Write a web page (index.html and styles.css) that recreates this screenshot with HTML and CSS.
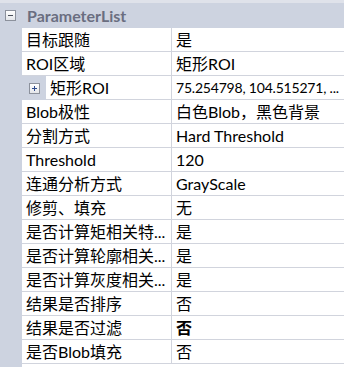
FILE: index.html
```html
<!DOCTYPE html>
<html>
<head>
<meta charset="utf-8">
<title>ParameterList</title>
<link rel="stylesheet" href="styles.css">
</head>
<body>
<div class="grid">
	<div class="cat">
		<span class="tog minus"></span>
		<span class="cat-name">ParameterList</span>
	</div>
	<div class="row"><div class="name">目标跟随</div><div class="val">是</div></div>
	<div class="row"><div class="name">ROI区域</div><div class="val">矩形ROI</div></div>
	<div class="row sub">
		<div class="indent"><span class="tog plus"></span></div>
		<div class="name">矩形ROI</div><div class="val coord">75.254798, 104.515271, ...</div>
	</div>
	<div class="row"><div class="name">Blob极性</div><div class="val">白色Blob，黑色背景</div></div>
	<div class="row"><div class="name">分割方式</div><div class="val">Hard Threshold</div></div>
	<div class="row"><div class="name">Threshold</div><div class="val">120</div></div>
	<div class="row"><div class="name">连通分析方式</div><div class="val">GrayScale</div></div>
	<div class="row"><div class="name">修剪、填充</div><div class="val">无</div></div>
	<div class="row"><div class="name">是否计算矩相关特...</div><div class="val">是</div></div>
	<div class="row"><div class="name">是否计算轮廓相关...</div><div class="val">是</div></div>
	<div class="row"><div class="name">是否计算灰度相关...</div><div class="val">是</div></div>
	<div class="row"><div class="name">结果是否排序</div><div class="val">否</div></div>
	<div class="row"><div class="name">结果是否过滤</div><div class="val bold">否</div></div>
	<div class="row"><div class="name">是否Blob填充</div><div class="val">否</div></div>
</div>
</body>
</html>
```

FILE: styles.css
```css
body {margin: 0;padding: 0;background: #fff;font-family: "Lato", "Noto Sans CJK SC", sans-serif;font-size: 16px;color: #000;}
.grid {width: 344px;height: 367px;background: linear-gradient(to right, #cdd3e0 22px, #fff 22px);border-top: 3px solid #dfe2ea;box-sizing: border-box;overflow: hidden;}
.cat {height: 25px;background: #cdd3e0;display: flex;align-items: center;}
.cat-name {margin-left: 11px;font-weight: bold;color: #6a6e80;font-size: 16px;}
.tog {display: inline-block;width: 9px;height: 9px;border: 1px solid #8c919c;background: linear-gradient(#fff, #e4e6ea);position: relative;margin-left: 5px;}
.tog::before {content: "";position: absolute;left: 2px;top: 4px;width: 5px;height: 1px;background: #4a4f5a;}
.plus::before {background: #2d4a8c;}
.plus::after {content: "";position: absolute;left: 4px;top: 2px;width: 1px;height: 5px;background: #2d4a8c;}
.row {display: grid;grid-template-columns: 150px 1fr;margin-left: 22px;height: 24px;}
.row.sub {grid-template-columns: 46px 126px 1fr;margin-left: 0;}
.sub .indent {background: #cdd3e0;display: flex;align-items: center;padding-left: 24px;}
.name, .val {border-bottom: 1px solid #d1d4dd;white-space: nowrap;overflow: hidden;line-height: 23px;}
.name {padding-left: 4px;border-right: 1px solid #d1d4dd;}
.val {padding-left: 4px;}
.coord {font-size: 14px;letter-spacing: -0.2px;}
.bold {font-weight: bold;}
```
